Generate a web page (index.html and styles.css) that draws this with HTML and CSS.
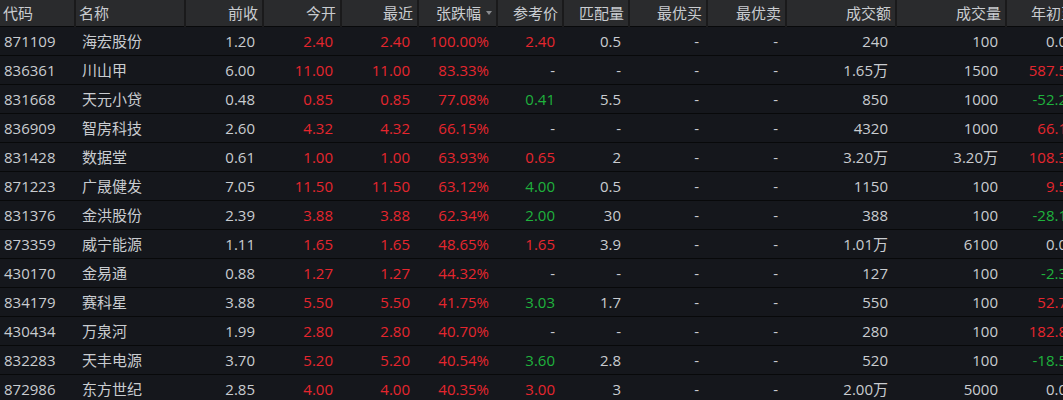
FILE: index.html
```html
<!DOCTYPE html>
<html lang="zh-CN">
<head>
  <meta charset="UTF-8">
  <title>行情列表</title>
  <link rel="stylesheet" href="styles.css">
</head>
<body>
  <table class="quotes">
    <colgroup>
      <col class="c-code"><col class="c-name"><col class="c-n"><col class="c-n"><col class="c-n2">
      <col class="c-chg"><col class="c-s"><col class="c-s"><col class="c-n"><col class="c-b">
      <col class="c-w"><col class="c-w"><col class="c-y">
    </colgroup>
    <thead>
      <tr>
        <th class="l">代码</th>
        <th class="l name">名称</th>
        <th>前收</th>
        <th>今开</th>
        <th>最近</th>
        <th>张跌幅<span class="sort"></span></th>
        <th>参考价</th>
        <th>匹配量</th>
        <th>最优买</th>
        <th>最优卖</th>
        <th>成交额</th>
        <th>成交量</th>
        <th>年初至今</th>
      </tr>
    </thead>
    <tbody>
      <tr><td class="l">871109</td><td class="l name">海宏股份</td><td>1.20</td><td class="up">2.40</td><td class="up">2.40</td><td class="up">100.00%</td><td class="up">2.40</td><td>0.5</td><td>-</td><td>-</td><td>240</td><td>100</td><td>0.00%</td></tr>
      <tr><td class="l">836361</td><td class="l name">川山甲</td><td>6.00</td><td class="up">11.00</td><td class="up">11.00</td><td class="up">83.33%</td><td>-</td><td>-</td><td>-</td><td>-</td><td>1.65万</td><td>1500</td><td class="up">587.50%</td></tr>
      <tr><td class="l">831668</td><td class="l name">天元小贷</td><td>0.48</td><td class="up">0.85</td><td class="up">0.85</td><td class="up">77.08%</td><td class="down">0.41</td><td>5.5</td><td>-</td><td>-</td><td>850</td><td>1000</td><td class="down">-52.20%</td></tr>
      <tr><td class="l">836909</td><td class="l name">智房科技</td><td>2.60</td><td class="up">4.32</td><td class="up">4.32</td><td class="up">66.15%</td><td>-</td><td>-</td><td>-</td><td>-</td><td>4320</td><td>1000</td><td class="up">66.15%</td></tr>
      <tr><td class="l">831428</td><td class="l name">数据堂</td><td>0.61</td><td class="up">1.00</td><td class="up">1.00</td><td class="up">63.93%</td><td class="up">0.65</td><td>2</td><td>-</td><td>-</td><td>3.20万</td><td>3.20万</td><td class="up">108.33%</td></tr>
      <tr><td class="l">871223</td><td class="l name">广晟健发</td><td>7.05</td><td class="up">11.50</td><td class="up">11.50</td><td class="up">63.12%</td><td class="down">4.00</td><td>0.5</td><td>-</td><td>-</td><td>1150</td><td>100</td><td class="up">9.52%</td></tr>
      <tr><td class="l">831376</td><td class="l name">金洪股份</td><td>2.39</td><td class="up">3.88</td><td class="up">3.88</td><td class="up">62.34%</td><td class="down">2.00</td><td>30</td><td>-</td><td>-</td><td>388</td><td>100</td><td class="down">-28.15%</td></tr>
      <tr><td class="l">873359</td><td class="l name">威宁能源</td><td>1.11</td><td class="up">1.65</td><td class="up">1.65</td><td class="up">48.65%</td><td class="up">1.65</td><td>3.9</td><td>-</td><td>-</td><td>1.01万</td><td>6100</td><td>0.00%</td></tr>
      <tr><td class="l">430170</td><td class="l name">金易通</td><td>0.88</td><td class="up">1.27</td><td class="up">1.27</td><td class="up">44.32%</td><td>-</td><td>-</td><td>-</td><td>-</td><td>127</td><td>100</td><td class="down">-2.31%</td></tr>
      <tr><td class="l">834179</td><td class="l name">赛科星</td><td>3.88</td><td class="up">5.50</td><td class="up">5.50</td><td class="up">41.75%</td><td class="down">3.03</td><td>1.7</td><td>-</td><td>-</td><td>550</td><td>100</td><td class="up">52.78%</td></tr>
      <tr><td class="l">430434</td><td class="l name">万泉河</td><td>1.99</td><td class="up">2.80</td><td class="up">2.80</td><td class="up">40.70%</td><td>-</td><td>-</td><td>-</td><td>-</td><td>280</td><td>100</td><td class="up">182.86%</td></tr>
      <tr><td class="l">832283</td><td class="l name">天丰电源</td><td>3.70</td><td class="up">5.20</td><td class="up">5.20</td><td class="up">40.54%</td><td class="down">3.60</td><td>2.8</td><td>-</td><td>-</td><td>520</td><td>100</td><td class="down">-18.58%</td></tr>
      <tr><td class="l">872986</td><td class="l name">东方世纪</td><td>2.85</td><td class="up">4.00</td><td class="up">4.00</td><td class="up">40.35%</td><td class="up">3.00</td><td>3</td><td>-</td><td>-</td><td>2.00万</td><td>5000</td><td>0.00%</td></tr>
    </tbody>
  </table>
</body>
</html>
```

FILE: styles.css
```css
body {
    margin: 0;
    padding: 0;
    background-color: #15171c;
    overflow: hidden;
}
.quotes {
    table-layout: fixed;
    border-collapse: collapse;
    width: 1096px;
    font-family: "Open Sans", "Noto Sans CJK SC", sans-serif;
    font-size: 15px;
    color: #c9ccd0;
}
.c-code { width: 75px; }
.c-name { width: 110px; }
.c-n { width: 78px; }
.c-n2 { width: 77px; }
.c-chg { width: 79px; }
.c-s { width: 66px; }
.c-b { width: 79px; }
.c-w { width: 110px; }
.c-y { width: 90px; }

.quotes th {
    height: 26px;
    padding: 0 4px 0 0;
    background-color: #2a2b2d;
    border-right: 2px solid #1a1a1b;
    border-bottom: 1px solid #08090a;
    font-weight: normal;
    text-align: right;
    white-space: nowrap;
    overflow: hidden;
    line-height: 26px;
}
.quotes td {
    height: 28px;
    padding: 0 8px 0 0;
    border-bottom: 1px solid #08090a;
    text-align: right;
    white-space: nowrap;
    overflow: hidden;
    line-height: 28px;
}
.quotes th.l {
    text-align: left;
    padding-left: 3px;
}
.quotes td.l {
    text-align: left;
    padding-left: 4px;
}
.quotes .name {
    padding-left: 6px;
}
.quotes td.name {
    padding-left: 7px;
}
.sort {
    display: inline-block;
    width: 0;
    height: 0;
    margin: 0 0 3px 5px;
    border-left: 3px solid transparent;
    border-right: 3px solid transparent;
    border-top: 4px solid #8a8c90;
    vertical-align: middle;
}
.up {
    color: #e5262e;
}
.down {
    color: #1fb23c;
}
```
